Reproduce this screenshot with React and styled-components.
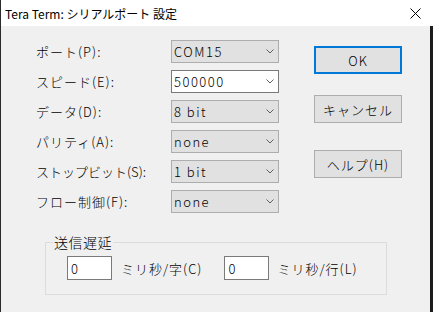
import React from "react";
import styled, { createGlobalStyle } from "styled-components";

const Global = createGlobalStyle`
  html, body { margin: 0; padding: 0; background: #f0f0f0; }
  body {
    font-family: "Noto Sans CJK JP", "Noto Sans", sans-serif;
    font-weight: 300;
  }
`;

const Window = styled.div`
  width: 433px;
  height: 312px;
  box-sizing: border-box;
  display: flex;
  flex-direction: column;
  background: #f0f0f0;
  border-left: 1px solid #2b2b2b;
  overflow: hidden;
`;

const TitleBar = styled.div`
  height: 26px;
  flex: none;
  background: #ffffff;
  display: flex;
  align-items: center;
  justify-content: space-between;
  padding: 0 12px 0 4px;
  font-size: 12px;
  font-weight: 400;
  color: #000;
`;

const Client = styled.div`
  flex: 1;
  display: flex;
  flex-direction: column;
  border-right: 3px solid #1c1c1c;
  padding-top: 14px;
`;

const Top = styled.div`
  display: flex;
  margin-left: 35px;
`;

const Form = styled.div`
  display: grid;
  grid-template-columns: 135px 108px;
  grid-auto-rows: 23px;
  row-gap: 7px;
  align-items: center;
`;

const Label = styled.div`
  font-size: 13px;
  letter-spacing: ${(p) => p.$ls ?? 1}px;
  color: #000;
  white-space: nowrap;
`;

const Combo = styled.div`
  height: 23px;
  box-sizing: border-box;
  border: 1px solid ${(p) => (p.$editable ? "#7a7a7a" : "#adadad")};
  background: ${(p) => (p.$editable ? "#ffffff" : "#e1e1e1")};
  display: flex;
  align-items: center;
  justify-content: space-between;
  padding: 0 4px 0 2px;
  font-size: 13px;
  letter-spacing: 1.5px;
  color: #000;
`;

const Buttons = styled.div`
  display: flex;
  flex-direction: column;
  margin-left: 35px;
`;

const Button = styled.div`
  width: 88px;
  height: 28px;
  box-sizing: border-box;
  margin-top: ${(p) => p.$mt}px;
  border: ${(p) => (p.$default ? "2px solid #0078d7" : "1px solid #adadad")};
  background: #e1e1e1;
  display: flex;
  align-items: center;
  justify-content: center;
  font-size: 13px;
  letter-spacing: 1px;
  color: #000;
`;

const Group = styled.fieldset`
  margin: 21px 0 0 44px;
  width: 342px;
  height: 61px;
  box-sizing: border-box;
  border: 1px solid #dcdcdc;
  padding: 6px 0 0 21px;
  display: flex;
  align-items: center;
`;

const Legend = styled.legend`
  font-size: 14px;
  letter-spacing: 0.5px;
  padding: 0 1px;
  margin-left: -14px;
  color: #000;
  line-height: 16px;
`;

const Row = styled.div`
  display: flex;
  align-items: center;
`;

const Edit = styled.div`
  width: 45px;
  height: 24px;
  box-sizing: border-box;
  border: 1px solid #7a7a7a;
  background: #fff;
  padding-left: 3px;
  display: flex;
  align-items: center;
  font-size: 13px;
  color: #000;
`;

const Unit = styled.div`
  font-size: 13px;
  letter-spacing: 1px;
  margin-left: ${(p) => p.$ml}px;
  margin-right: ${(p) => p.$mr}px;
  white-space: nowrap;
`;

const Chevron = () => (
  <svg width="8" height="5" viewBox="0 0 8 5">
    <polyline points="0.5,0.5 4,4 7.5,0.5" fill="none" stroke="#606060" strokeWidth="1" />
  </svg>
);

const CloseIcon = () => (
  <svg width="11" height="11" viewBox="0 0 11 11">
    <path d="M0.5 0.5 L10.5 10.5 M10.5 0.5 L0.5 10.5" stroke="#000" strokeWidth="1" />
  </svg>
);

const rows = [
  { label: "ポート(P):", value: "COM15" },
  { label: "スピード(E):", value: "500000", editable: true },
  { label: "データ(D):", value: "8 bit" },
  { label: "パリティ(A):", value: "none" },
  { label: "ストップビット(S):", value: "1 bit", ls: 0 },
  { label: "フロー制御(F):", value: "none" },
];

export default function App() {
  return (
    <>
      <Global />
      <Window>
        <TitleBar>
          <span>Tera Term: シリアルポート 設定</span>
          <CloseIcon />
        </TitleBar>
        <Client>
          <Top>
            <Form>
              {rows.map((r) => (
                <React.Fragment key={r.label}>
                  <Label $ls={r.ls}>{r.label}</Label>
                  <Combo $editable={r.editable}>
                    <span>{r.value}</span>
                    <Chevron />
                  </Combo>
                </React.Fragment>
              ))}
            </Form>
            <Buttons>
              <Button $default $mt={6}>OK</Button>
              <Button $mt={21}>キャンセル</Button>
              <Button $mt={27}>ヘルプ(H)</Button>
            </Buttons>
          </Top>
          <Group>
            <Legend>送信遅延</Legend>
            <Row>
              <Edit>0</Edit>
              <Unit $ml={9} $mr={22}>ミリ秒/字(C)</Unit>
              <Edit>0</Edit>
              <Unit $ml={8} $mr={0}>ミリ秒/行(L)</Unit>
            </Row>
          </Group>
        </Client>
      </Window>
    </>
  );
}
